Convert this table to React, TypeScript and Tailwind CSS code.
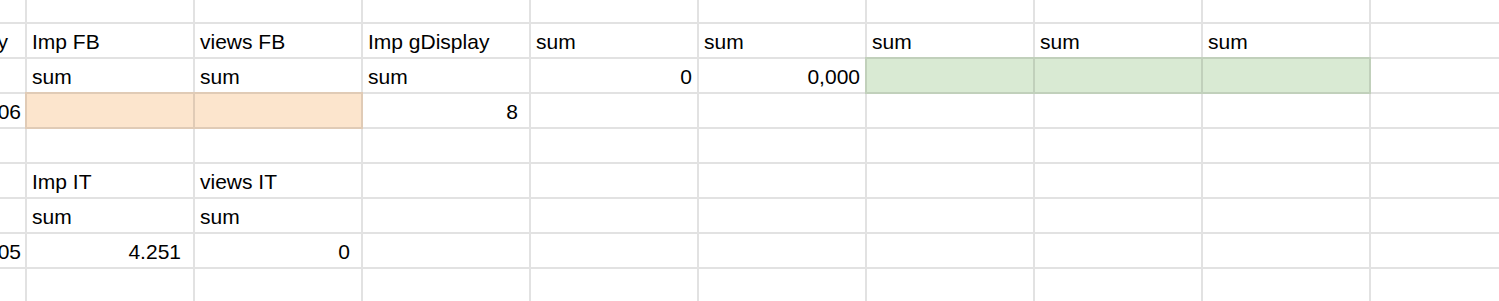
type Cell = {
  text?: string;
  align?: "left" | "right";
  pad?: string;
  fill?: "orange" | "green";
};

const COLS = 10;

// sparse sheet contents, row -> col -> cell
const sheet: Record<number, Record<number, Cell>> = {
  1: {
    0: { text: "y", align: "right", pad: "pr-[17px]" },
    1: { text: "Imp FB" },
    2: { text: "views FB" },
    3: { text: "Imp gDisplay" },
    4: { text: "sum" },
    5: { text: "sum" },
    6: { text: "sum" },
    7: { text: "sum" },
    8: { text: "sum" },
  },
  2: {
    1: { text: "sum" },
    2: { text: "sum" },
    3: { text: "sum" },
    4: { text: "0", align: "right", pad: "pr-[5px]" },
    5: { text: "0,000", align: "right", pad: "pr-[5px]" },
    6: { fill: "green" },
    7: { fill: "green" },
    8: { fill: "green" },
  },
  3: {
    0: { text: "06", align: "right", pad: "pr-[4px]" },
    1: { fill: "orange" },
    2: { fill: "orange" },
    3: { text: "8", align: "right", pad: "pr-[11px]" },
  },
  5: {
    1: { text: "Imp IT" },
    2: { text: "views IT" },
  },
  6: {
    1: { text: "sum" },
    2: { text: "sum" },
  },
  7: {
    0: { text: "05", align: "right", pad: "pr-[4px]" },
    1: { text: "4.251", align: "right", pad: "pr-[12px]" },
    2: { text: "0", align: "right", pad: "pr-[11px]" },
  },
};

const ROWS = 9;

function SheetCell({ cell, first }: { cell?: Cell; first: boolean }) {
  const fill =
    cell?.fill === "orange"
      ? "relative bg-[#fce5cd] border-[#e0cbb6] shadow-[-2px_0_0_#e0cbb6,0_-2px_0_#e0cbb6,-2px_-2px_0_#e0cbb6]"
      : cell?.fill === "green"
        ? "relative bg-[#d9ead3] border-[#c1d0bb] shadow-[-2px_0_0_#c1d0bb,0_-2px_0_#c1d0bb,-2px_-2px_0_#c1d0bb]"
        : "border-[#e2e2e2]";
  const align = cell?.align === "right" ? "justify-end" : "justify-start";
  const pad = cell?.pad ?? "pl-[5px]";
  return (
    <div
      className={`flex items-end overflow-hidden whitespace-nowrap border-r-2 border-b-2 pb-[3px] ${fill} ${align} ${pad} ${first ? "h-[24px]" : "h-[35px]"}`}
    >
      {cell?.text && <span className="shrink-0 leading-[24px]">{cell.text}</span>}
    </div>
  );
}

export default function App() {
  return (
    <div
      className="w-[1499px] h-[301px] overflow-hidden bg-white text-black text-[21px]"
      style={{ fontFamily: '"Liberation Sans", Arial, sans-serif' }}
    >
      <div className="grid grid-cols-[27px_repeat(9,168px)] w-max">
        {Array.from({ length: ROWS }).map((_, r) =>
          Array.from({ length: COLS }).map((_, c) => (
            <SheetCell key={`${r}-${c}`} cell={sheet[r]?.[c]} first={r === 0} />
          )),
        )}
      </div>
    </div>
  );
}
